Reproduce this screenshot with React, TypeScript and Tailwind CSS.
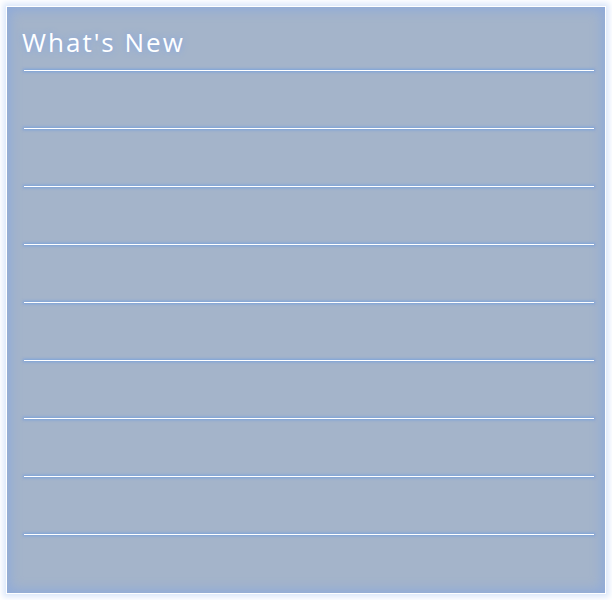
const rows = Array.from({ length: 8 });

const Line = () => (
  <div className="h-px bg-white shadow-[0_0_3px_1px_rgba(110,155,225,0.8)]" />
);

const App = () => {
  return (
    <div className="min-h-[600px] w-[612px] bg-white pt-[6px] pl-[6px]">
      <div
        className="h-[588px] w-[600px] border border-white bg-[#a4b4ca] shadow-[0_0_6px_3px_#dbe7fa,inset_0_0_12px_3px_#8eaada]"
        style={{ fontFamily: '"Open Sans", "Noto Sans", sans-serif' }}
      >
        <div className="pl-[15px] pt-[19px]">
          <h1 className="text-[26px] leading-[32px] font-normal tracking-[2px] text-white [text-shadow:0_0_6px_#7fa4e6]">
            What's New
          </h1>
        </div>
        <div className="mt-[12px] pl-[17px] pr-[11px]">
          <Line />
          {rows.map((_, i) => (
            <div key={i}>
              <div className="h-[57px]" />
              <Line />
            </div>
          ))}
        </div>
      </div>
    </div>
  );
};

export default App;
